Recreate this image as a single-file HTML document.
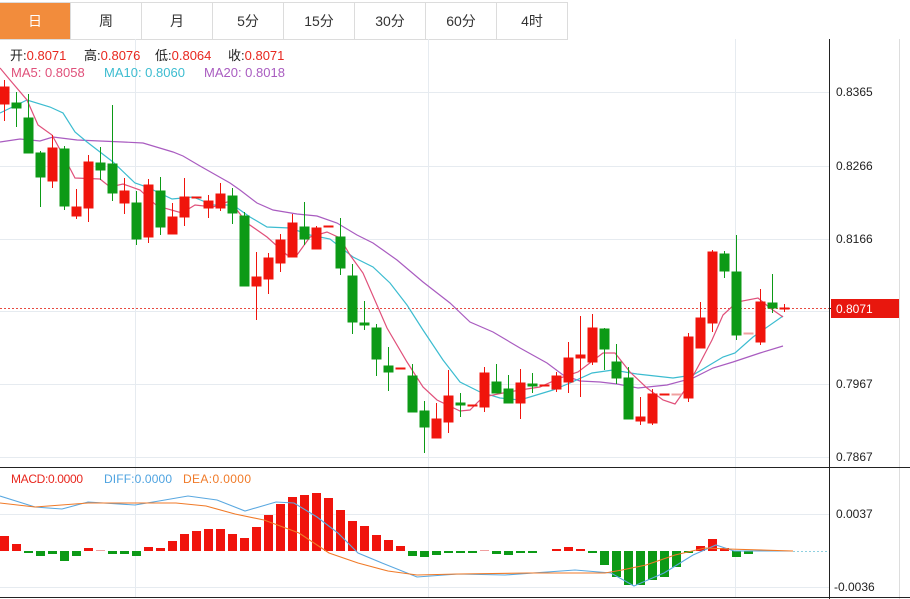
<!DOCTYPE html>
<html><head><meta charset="utf-8"><style>
html,body{margin:0;padding:0;background:#fff;width:910px;height:599px;overflow:hidden;font-family:"Liberation Sans","Noto Sans CJK SC",sans-serif}
.tabs{position:absolute;left:0;top:2px;height:36px;display:flex;border-top:1px solid #dcdcdc;border-bottom:1px solid #dcdcdc}
.tab{width:70px;border-right:1px solid #dcdcdc;text-align:center;line-height:36px;font-size:14px;color:#333}
.tab.on{background:#f28c3c;color:#fff}
svg{position:absolute;left:0;top:0}
</style></head><body>
<div class="tabs"><div class="tab on">日</div><div class="tab">周</div><div class="tab">月</div><div class="tab">5分</div><div class="tab">15分</div><div class="tab">30分</div><div class="tab">60分</div><div class="tab">4时</div></div>
<svg width="910" height="599" viewBox="0 0 910 599" font-family="Liberation Sans, Noto Sans CJK SC, sans-serif">
<g stroke="#e6ebf0" stroke-width="1">
<line x1="135.5" y1="39" x2="135.5" y2="597"/><line x1="428.5" y1="39" x2="428.5" y2="597"/><line x1="735.5" y1="39" x2="735.5" y2="597"/>
<line x1="0" y1="92.5" x2="829" y2="92.5"/><line x1="0" y1="166.5" x2="829" y2="166.5"/><line x1="0" y1="239.5" x2="829" y2="239.5"/><line x1="0" y1="311.5" x2="829" y2="311.5"/><line x1="0" y1="384.5" x2="829" y2="384.5"/><line x1="0" y1="457.5" x2="829" y2="457.5"/>
<line x1="0" y1="514.5" x2="829" y2="514.5"/><line x1="0" y1="587.5" x2="829" y2="587.5"/>
</g>
<line x1="829.5" y1="39" x2="829.5" y2="599" stroke="#222"/>
<line x1="899.5" y1="39" x2="899.5" y2="599" stroke="#ddd"/>
<line x1="0" y1="467.5" x2="910" y2="467.5" stroke="#222"/>
<line x1="0" y1="597.5" x2="910" y2="597.5" stroke="#222"/>
<line x1="0" y1="308.5" x2="829" y2="308.5" stroke="#e84a40" stroke-dasharray="2,2"/>
<g font-size="12" fill="#222">
<text x="836" y="96">0.8365</text><text x="836" y="170">0.8266</text><text x="836" y="243">0.8166</text><text x="836" y="388">0.7967</text><text x="836" y="461">0.7867</text>
<text x="836" y="518">0.0037</text><text x="834" y="591">-0.0036</text>
</g>
<line x1="829" y1="308.5" x2="833" y2="308.5" stroke="#222"/>
<rect x="831" y="299" width="68" height="19" fill="#e8170e"/>
<text x="836" y="313" font-size="12" fill="#fff">0.8071</text>
<g font-size="13">
<text x="10" y="60" fill="#222">开:<tspan fill="#e8271e">0.8071</tspan><tspan x="84" fill="#222">高:</tspan><tspan fill="#e8271e">0.8076</tspan><tspan x="155" fill="#222">低:</tspan><tspan fill="#e8271e">0.8064</tspan><tspan x="228" fill="#222">收:</tspan><tspan fill="#e8271e">0.8071</tspan></text>
<text x="11" y="77" fill="#e0507a">MA5: 0.8058</text><text x="104" y="77" fill="#3cbcd0">MA10: 0.8060</text><text x="204" y="77" fill="#a95cc0">MA20: 0.8018</text>
</g>
<g font-size="12">
<text x="11" y="483" fill="#e8271e" textLength="72">MACD:0.0000</text><text x="104" y="483" fill="#4ea3e0" textLength="68">DIFF:0.0000</text><text x="183" y="483" fill="#f07a28" textLength="68">DEA:0.0000</text>
</g>
<g fill="none" stroke-width="1.2">
<polyline stroke="#a95cc0" points="0,142 20,139 40,141 53,137 77,140 100,141 123,142 143,143 173,152 183,156 200,166 230,183 240,190 257,203 273,210 297,214 317,216 337,223 357,235 373,243 397,260 423,282 450,303 470,322 493,332 520,348 547,363 563,375 580,381 600,382 617,384 638,388 667,385 693,378 713,368 733,362 760,353 783,346"/>
<polyline stroke="#3cbcd0" points="0,113 27,100 50,107 63,113 75,132 87,142 100,152 113,162 135,183 147,187 172,199 193,197 213,205 233,205 250,217 267,227 290,228 310,235 330,239 353,257 373,267 390,283 407,305 423,330 443,360 460,382 480,392 500,398 520,400 553,390 570,383 592,373 613,370 637,374 673,378 693,375 713,363 723,357 735,353 753,337 783,316"/>
<polyline stroke="#e0507a" points="0,68 10,80 27,100 38,125 52,135 63,155 75,178 100,179 110,187 123,184 140,190 157,206 182,213 195,205 213,207 230,201 247,223 267,237 287,255 297,255 310,237 327,232 340,238 350,255 363,273 387,328 407,362 423,387 437,400 460,411 470,410 483,397 503,393 520,390 540,387 560,378 578,372 603,353 615,353 630,372 647,388 663,400 675,404 687,387 700,363 712,340 723,315 737,302 758,298 770,308 783,317"/>
</g>
<g stroke-width="1">
<g fill="#f0140c" stroke="#f0140c">
<line x1="4.5" y1="80" x2="4.5" y2="121"/><rect x="0" y="87" width="9" height="17"/>
<line x1="52.5" y1="135" x2="52.5" y2="188"/><rect x="48" y="148" width="9" height="33"/>
<line x1="76.5" y1="189" x2="76.5" y2="219"/><rect x="72" y="207" width="9" height="9"/>
<line x1="88.5" y1="155" x2="88.5" y2="222"/><rect x="84" y="162" width="9" height="46"/>
<line x1="124.5" y1="178" x2="124.5" y2="214"/><rect x="120" y="191" width="9" height="12"/>
<line x1="148.5" y1="179" x2="148.5" y2="243"/><rect x="144" y="185" width="9" height="52"/>
<line x1="172.5" y1="203" x2="172.5" y2="234"/><rect x="168" y="217" width="9" height="17"/>
<line x1="184.5" y1="178" x2="184.5" y2="226"/><rect x="180" y="197" width="9" height="20"/>
<rect x="192" y="197" width="9" height="1"/>
<line x1="208.5" y1="195" x2="208.5" y2="218"/><rect x="204" y="201" width="9" height="7"/>
<line x1="220.5" y1="183" x2="220.5" y2="211"/><rect x="216" y="194" width="9" height="14"/>
<line x1="256.5" y1="252" x2="256.5" y2="320"/><rect x="252" y="277" width="9" height="9"/>
<line x1="268.5" y1="253" x2="268.5" y2="294"/><rect x="264" y="258" width="9" height="21"/>
<line x1="280.5" y1="234" x2="280.5" y2="272"/><rect x="276" y="240" width="9" height="23"/>
<line x1="292.5" y1="214" x2="292.5" y2="257"/><rect x="288" y="223" width="9" height="34"/>
<line x1="316.5" y1="226" x2="316.5" y2="249"/><rect x="312" y="228" width="9" height="21"/>
<rect x="324" y="226" width="9" height="1"/>
<rect x="396" y="368" width="9" height="1"/>
<line x1="436.5" y1="403" x2="436.5" y2="438"/><rect x="432" y="419" width="9" height="19"/>
<line x1="448.5" y1="370" x2="448.5" y2="433"/><rect x="444" y="396" width="9" height="26"/>
<rect x="468" y="405" width="9" height="1"/>
<line x1="484.5" y1="367" x2="484.5" y2="412"/><rect x="480" y="373" width="9" height="34"/>
<line x1="520.5" y1="369" x2="520.5" y2="419"/><rect x="516" y="383" width="9" height="20"/>
<rect x="540" y="385" width="9" height="1"/>
<line x1="556.5" y1="372" x2="556.5" y2="392"/><rect x="552" y="376" width="9" height="13"/>
<line x1="568.5" y1="342" x2="568.5" y2="393"/><rect x="564" y="358" width="9" height="24"/>
<line x1="580.5" y1="316" x2="580.5" y2="397"/><rect x="576" y="355" width="9" height="3"/>
<line x1="592.5" y1="314" x2="592.5" y2="365"/><rect x="588" y="328" width="9" height="34"/>
<line x1="640.5" y1="397" x2="640.5" y2="425"/><rect x="636" y="417" width="9" height="4"/>
<line x1="652.5" y1="389" x2="652.5" y2="425"/><rect x="648" y="394" width="9" height="29"/>
<rect x="660" y="394" width="9" height="1"/>
<line x1="688.5" y1="333" x2="688.5" y2="402"/><rect x="684" y="337" width="9" height="61"/>
<line x1="700.5" y1="302" x2="700.5" y2="348"/><rect x="696" y="318" width="9" height="30"/>
<line x1="712.5" y1="250" x2="712.5" y2="332"/><rect x="708" y="252" width="9" height="71"/>
<line x1="760.5" y1="289" x2="760.5" y2="345"/><rect x="756" y="302" width="9" height="40"/>
<line x1="784.5" y1="304" x2="784.5" y2="312"/><rect x="780" y="308" width="9" height="1"/>
</g>
<g fill="#f0a0a0" stroke="#f0a0a0">
<rect x="672" y="394" width="9" height="1"/><rect x="744" y="333" width="9" height="1"/>
</g>
<g fill="#0c9a16" stroke="#0c9a16">
<line x1="16.5" y1="92" x2="16.5" y2="127"/><rect x="12" y="103" width="9" height="5"/>
<line x1="28.5" y1="94" x2="28.5" y2="153"/><rect x="24" y="118" width="9" height="35"/>
<line x1="40.5" y1="151" x2="40.5" y2="207"/><rect x="36" y="153" width="9" height="24"/>
<line x1="64.5" y1="146" x2="64.5" y2="210"/><rect x="60" y="149" width="9" height="57"/>
<line x1="100.5" y1="147" x2="100.5" y2="180"/><rect x="96" y="163" width="9" height="7"/>
<line x1="112.5" y1="105" x2="112.5" y2="201"/><rect x="108" y="164" width="9" height="29"/>
<line x1="136.5" y1="191" x2="136.5" y2="245"/><rect x="132" y="203" width="9" height="36"/>
<line x1="160.5" y1="177" x2="160.5" y2="235"/><rect x="156" y="191" width="9" height="36"/>
<line x1="232.5" y1="188" x2="232.5" y2="224"/><rect x="228" y="196" width="9" height="17"/>
<line x1="244.5" y1="212" x2="244.5" y2="286"/><rect x="240" y="216" width="9" height="70"/>
<line x1="304.5" y1="202" x2="304.5" y2="245"/><rect x="300" y="227" width="9" height="12"/>
<line x1="340.5" y1="218" x2="340.5" y2="275"/><rect x="336" y="237" width="9" height="31"/>
<line x1="352.5" y1="264" x2="352.5" y2="334"/><rect x="348" y="276" width="9" height="46"/>
<line x1="364.5" y1="301" x2="364.5" y2="330"/><rect x="360" y="323" width="9" height="2"/>
<line x1="376.5" y1="324" x2="376.5" y2="376"/><rect x="372" y="328" width="9" height="31"/>
<line x1="388.5" y1="347" x2="388.5" y2="391"/><rect x="384" y="366" width="9" height="6"/>
<line x1="412.5" y1="364" x2="412.5" y2="412"/><rect x="408" y="376" width="9" height="36"/>
<line x1="424.5" y1="401" x2="424.5" y2="453"/><rect x="420" y="411" width="9" height="16"/>
<line x1="460.5" y1="393" x2="460.5" y2="417"/><rect x="456" y="403" width="9" height="2"/>
<line x1="496.5" y1="364" x2="496.5" y2="393"/><rect x="492" y="382" width="9" height="11"/>
<line x1="508.5" y1="375" x2="508.5" y2="403"/><rect x="504" y="389" width="9" height="14"/>
<line x1="532.5" y1="373" x2="532.5" y2="393"/><rect x="528" y="384" width="9" height="2"/>
<line x1="604.5" y1="328" x2="604.5" y2="370"/><rect x="600" y="329" width="9" height="20"/>
<line x1="616.5" y1="344" x2="616.5" y2="384"/><rect x="612" y="362" width="9" height="16"/>
<line x1="628.5" y1="367" x2="628.5" y2="419"/><rect x="624" y="378" width="9" height="41"/>
<line x1="724.5" y1="251" x2="724.5" y2="278"/><rect x="720" y="254" width="9" height="17"/>
<line x1="736.5" y1="235" x2="736.5" y2="340"/><rect x="732" y="272" width="9" height="63"/>
<line x1="772.5" y1="274" x2="772.5" y2="313"/><rect x="768" y="303" width="9" height="5"/>
</g>
</g>
<g fill="#f0140c">
<rect x="0" y="536" width="9" height="15"/><rect x="12" y="544" width="9" height="7"/>
<rect x="84" y="548" width="9" height="3"/><rect x="96" y="550" width="9" height="1" fill="#f0a0a0"/>
<rect x="144" y="547" width="9" height="4"/><rect x="156" y="548" width="9" height="3"/><rect x="168" y="541" width="9" height="10"/><rect x="180" y="534" width="9" height="17"/><rect x="192" y="531" width="9" height="20"/><rect x="204" y="529" width="9" height="22"/><rect x="216" y="529" width="9" height="22"/><rect x="228" y="534" width="9" height="17"/><rect x="240" y="538" width="9" height="13"/><rect x="252" y="527" width="9" height="24"/><rect x="264" y="515" width="9" height="36"/><rect x="276" y="504" width="9" height="47"/><rect x="288" y="497" width="9" height="54"/><rect x="300" y="495" width="9" height="56"/><rect x="312" y="493" width="9" height="58"/><rect x="324" y="498" width="9" height="53"/><rect x="336" y="510" width="9" height="41"/><rect x="348" y="521" width="9" height="30"/><rect x="360" y="526" width="9" height="25"/><rect x="372" y="535" width="9" height="16"/><rect x="384" y="540" width="9" height="11"/><rect x="396" y="546" width="9" height="5"/>
<rect x="480" y="550" width="9" height="1" fill="#f0a0a0"/>
<rect x="552" y="549" width="9" height="2"/><rect x="564" y="547" width="9" height="4"/><rect x="576" y="549" width="9" height="2"/>
<rect x="696" y="546" width="9" height="5"/><rect x="708" y="539" width="9" height="12"/><rect x="720" y="548" width="9" height="3"/>
</g>
<g fill="#0c9a16">
<rect x="24" y="551" width="9" height="2"/><rect x="36" y="551" width="9" height="5"/><rect x="48" y="551" width="9" height="3"/><rect x="60" y="551" width="9" height="10"/><rect x="72" y="551" width="9" height="5"/>
<rect x="108" y="551" width="9" height="3"/><rect x="120" y="551" width="9" height="3"/><rect x="132" y="551" width="9" height="5"/>
<rect x="408" y="551" width="9" height="5"/><rect x="420" y="551" width="9" height="6"/><rect x="432" y="551" width="9" height="4"/><rect x="444" y="551" width="9" height="2"/><rect x="456" y="551" width="9" height="2"/><rect x="468" y="551" width="9" height="2"/>
<rect x="492" y="551" width="9" height="3"/><rect x="504" y="551" width="9" height="4"/><rect x="516" y="551" width="9" height="2"/><rect x="528" y="551" width="9" height="2"/>
<rect x="588" y="551" width="9" height="2"/><rect x="600" y="551" width="9" height="14"/><rect x="612" y="551" width="9" height="26"/><rect x="624" y="551" width="9" height="34"/><rect x="636" y="551" width="9" height="34"/><rect x="648" y="551" width="9" height="29"/><rect x="660" y="551" width="9" height="26"/><rect x="672" y="551" width="9" height="16"/><rect x="684" y="551" width="9" height="2"/>
<rect x="732" y="551" width="9" height="6"/><rect x="744" y="551" width="9" height="3"/>
</g>
<line x1="793" y1="551.5" x2="829" y2="551.5" stroke="#8fd0e0" stroke-dasharray="2,2"/>
<g fill="none" stroke-width="1.1">
<polyline stroke="#5aa8e0" points="0,496 35,507 62,509 88,502 135,505 159,501 188,496 217,500 245,511 276,502 294,503 317,517 338,533 358,553 382,563 417,577 458,574 505,575 575,570 611,573 634,586 664,573 693,555 716,545 734,551 752,551 793,551"/>
<polyline stroke="#f07a28" points="0,503 35,507 88,503 176,503 206,506 235,514 264,520 299,533 329,553 358,563 388,571 417,575 458,574 528,573 605,573 622,570 646,565 675,555 705,548 728,549 793,551"/>
</g>
</svg>
</body></html>
